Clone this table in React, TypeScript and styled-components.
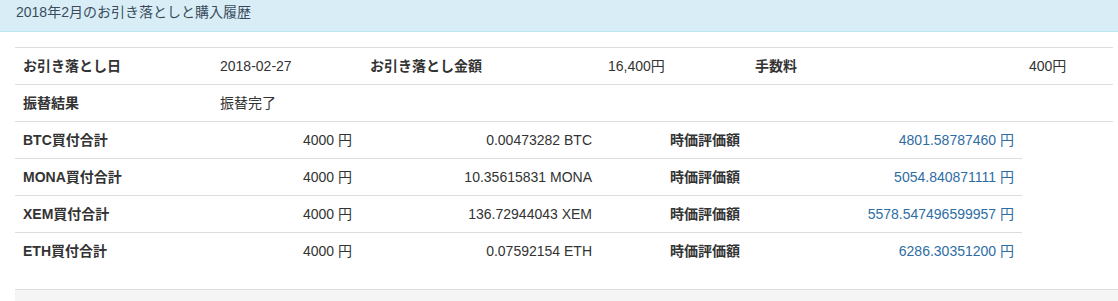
import styled, { createGlobalStyle } from 'styled-components';

const GlobalStyle = createGlobalStyle`
  body {
    margin: 0;
    background: #fff;
    font-family: "Liberation Sans", "Noto Sans CJK JP", sans-serif;
    font-size: 14px;
    color: #333;
  }
`;

const Panel = styled.section`
  width: 100%;
`;

const PanelHeading = styled.div`
  background: #d9edf7;
  border-bottom: 1px solid #bce8f1;
  color: #3a4c5c;
  padding: 2px 15px 9px 16px;
  line-height: 20px;
  font-size: 14px;
`;

const PanelBody = styled.div`
  padding: 15px 0 0 15px;
`;

const Table = styled.table<{ $width: number; $closed?: boolean }>`
  width: ${(p) => p.$width}px;
  border-collapse: collapse;
  table-layout: fixed;
  margin-bottom: ${(p) => (p.$closed ? '0' : '20px')};
  border-bottom: ${(p) => (p.$closed ? '1px solid #ddd' : 'none')};
`;

const Row = styled.tr<{ $first?: boolean }>`
  & > td {
    border-top: ${(p) => (p.$first ? 'none' : '1px solid #ddd')};
  }
`;

const Cell = styled.td<{ $label?: boolean; $right?: boolean; $link?: boolean; $indent?: number }>`
  height: 36px;
  padding: 0 8px 0 ${(p) => (p.$indent ?? 8)}px;
  vertical-align: middle;
  box-sizing: content-box;
  white-space: nowrap;
  font-weight: ${(p) => (p.$label ? 700 : 400)};
  text-align: ${(p) => (p.$right ? 'right' : 'left')};
  color: ${(p) => (p.$link ? '#2e6da4' : '#333')};
  line-height: 20px;
`;

const Footer = styled.div`
  margin-left: 15px;
  height: 20px;
  background: #f5f5f5;
  border-top: 1px solid #ddd;
`;

const summaryCols = [197, 150, 238, 147, 274, 92];
const coinCols = [185, 160, 240, 230, 192];

const coins = [
  { name: 'BTC', amount: '0.00473282 BTC', value: '4801.58787460 円' },
  { name: 'MONA', amount: '10.35615831 MONA', value: '5054.840871111 円' },
  { name: 'XEM', amount: '136.72944043 XEM', value: '5578.547496599957 円' },
  { name: 'ETH', amount: '0.07592154 ETH', value: '6286.30351200 円' },
];

export default function App() {
  return (
    <>
      <GlobalStyle />
      <Panel>
        <PanelHeading>2018年2月のお引き落としと購入履歴</PanelHeading>
        <PanelBody>
          <Table $width={1098} $closed>
            <colgroup>
              {summaryCols.map((w, i) => (
                <col key={i} style={{ width: w }} />
              ))}
            </colgroup>
            <tbody>
              <Row>
                <Cell $label>お引き落とし日</Cell>
                <Cell>2018-02-27</Cell>
                <Cell $label>お引き落とし金額</Cell>
                <Cell>16,400円</Cell>
                <Cell $label>手数料</Cell>
                <Cell>400円</Cell>
              </Row>
              <Row>
                <Cell $label>振替結果</Cell>
                <Cell>振替完了</Cell>
                <Cell />
                <Cell />
                <Cell />
                <Cell />
              </Row>
            </tbody>
          </Table>
          <Table $width={1007}>
            <colgroup>
              {coinCols.map((w, i) => (
                <col key={i} style={{ width: w }} />
              ))}
            </colgroup>
            <tbody>
              {coins.map((c, i) => (
                <Row key={c.name} $first={i === 0}>
                  <Cell $label>{c.name}買付合計</Cell>
                  <Cell $right>4000 円</Cell>
                  <Cell $right>{c.amount}</Cell>
                  <Cell $label $indent={70}>時価評価額</Cell>
                  <Cell $right $link>{c.value}</Cell>
                </Row>
              ))}
            </tbody>
          </Table>
        </PanelBody>
        <Footer />
      </Panel>
    </>
  );
}
